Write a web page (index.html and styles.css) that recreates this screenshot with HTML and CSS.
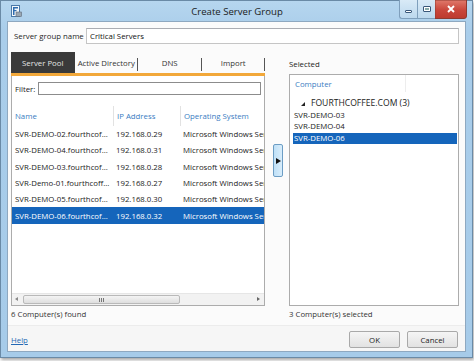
FILE: index.html
```html
<!DOCTYPE html>
<html>
<head>
<meta charset="utf-8">
<link rel="stylesheet" href="styles.css">
</head>
<body>
<div class="window">
  <div class="titlebar">
    <div class="tb-left">
      <svg class="appicon" width="11" height="12" viewBox="0 0 11 12">
        <rect x="0.5" y="0.5" width="8" height="11" fill="#f4f8fc" stroke="#4a78a8"/>
        <rect x="2" y="2" width="5" height="1.5" fill="#2f6db0"/>
        <rect x="2" y="2" width="1.5" height="8" fill="#2f6db0"/>
        <rect x="2" y="5" width="3.5" height="1.2" fill="#2f6db0"/>
        <rect x="5" y="7" width="5.5" height="4.5" fill="#9aa6b2" stroke="#5d6a78" stroke-width="0.6"/>
      </svg>
    </div>
    <div class="title">Create Server Group</div>
    <div class="controls">
      <span class="ctl min"><i></i></span>
      <span class="ctl max"><i></i></span>
      <svg class="xbtn" width="32" height="19" viewBox="0 0 32 19">
        <defs>
          <linearGradient id="xg" x1="0" y1="0" x2="0" y2="1">
            <stop offset="0" stop-color="#e07a6c"/>
            <stop offset="0.55" stop-color="#c9463b"/>
            <stop offset="1" stop-color="#bd3a2e"/>
          </linearGradient>
        </defs>
        <path d="M0 0 H31.5 V16 Q31.5 18.5 29 18.5 H0 Z" fill="url(#xg)" stroke="#8e3a30" stroke-width="1"/>
        <path d="M13 6 L19 12 M19 6 L13 12" stroke="#ffffff" stroke-width="1.9" fill="none"/>
      </svg>
    </div>
  </div>
  <div class="client">
    <div class="namerow">
      <span class="namelabel">Server group name</span>
      <div class="textbox">Critical Servers</div>
    </div>
    <div class="main">
      <div class="leftcol">
        <div class="tabs">
          <div class="tab active">Server Pool</div>
          <div class="tab">Active Directory</div>
          <div class="tab">DNS</div>
          <div class="tab">Import</div>
        </div>
        <div class="orange"></div>
        <div class="panel">
          <div class="filter">
            <span class="filterlabel">Filter:</span>
            <div class="filterbox"></div>
          </div>
          <div class="list">
            <div class="row hdr">
              <span class="c1">Name</span><span class="c2">IP Address</span><span class="c3">Operating System</span>
            </div>
            <div class="row"><span class="c1">SVR-DEMO-02.fourthcof...</span><span class="c2">192.168.0.29</span><span class="c3">Microsoft Windows Ser</span></div>
            <div class="row"><span class="c1">SVR-DEMO-04.fourthcof...</span><span class="c2">192.168.0.31</span><span class="c3">Microsoft Windows Ser</span></div>
            <div class="row"><span class="c1">SVR-DEMO-03.fourthcof...</span><span class="c2">192.168.0.28</span><span class="c3">Microsoft Windows Ser</span></div>
            <div class="row"><span class="c1">SVR-Demo-01.fourthcoff...</span><span class="c2">192.168.0.27</span><span class="c3">Microsoft Windows Ser</span></div>
            <div class="row"><span class="c1">SVR-DEMO-05.fourthcof...</span><span class="c2">192.168.0.30</span><span class="c3">Microsoft Windows Ser</span></div>
            <div class="row sel"><span class="c1">SVR-DEMO-06.fourthcof...</span><span class="c2">192.168.0.32</span><span class="c3">Microsoft Windows Ser</span></div>
          </div>
          <div class="hscroll">
            <span class="sarrow left"></span>
            <div class="strack"><div class="thumb"><span class="grip"></span></div></div>
            <span class="sarrow right"></span>
          </div>
        </div>
      </div>
      <div class="mid"><div class="addbtn"><span class="tri"></span></div></div>
      <div class="rightcol">
        <div class="sellabel">Selected</div>
        <div class="selbox">
          <div class="selhdr"><span>Computer</span></div>
          <div class="group"><span class="gtri"></span>FOURTHCOFFEE.COM (3)</div>
          <div class="item">SVR-DEMO-03</div>
          <div class="item">SVR-DEMO-04</div>
          <div class="item sel">SVR-DEMO-06</div>
        </div>
      </div>
      <div class="status">6 Computer(s) found</div>
      <div></div>
      <div class="status">3 Computer(s) selected</div>
    </div>
    <div class="footer">
      <a class="help" href="#">Help</a>
      <div class="btns">
        <div class="btn">OK</div>
        <div class="btn">Cancel</div>
      </div>
    </div>
  </div>
</div>
</body>
</html>
```
FILE: styles.css
```css
* { box-sizing: border-box; }
html, body { margin: 0; padding: 0; }
body {
  background: #ffffff;
  font-family: "Open Sans", "Noto Sans", sans-serif;
  font-size: 7.8px;
  color: #222;
  width: 474px;
  height: 361px;
  overflow: hidden;
}
.window {
  width: 473px;
  height: 358px;
  border: 1px solid #6a8aa6;
  background: linear-gradient(#b6d6ef, #a9cdea 30px, #a6cbe9);
  padding: 0 6px 6px 6px;
  box-shadow: 1px 2px 3px rgba(0,0,0,0.35);
}
.titlebar {
  height: 20px;
  display: grid;
  grid-template-columns: 1fr auto 1fr;
  align-items: start;
  margin-right: -1px;
}
.tb-left { padding: 4px 0 0 4px; height: 20px; }
.appicon { display: block; }
.title {
  font-size: 9.6px;
  color: #1b1b1b;
  line-height: 21px;
}
.controls {
  justify-self: end;
  display: flex;
  height: 19px;
  margin-top: -1px;
}
.ctl {
  display: flex;
  align-items: center;
  justify-content: center;
  height: 19px;
  border: 1px solid #7f9fbc;
  border-top: none;
  background: linear-gradient(#d9eaf7, #bcd8ee);
}
.ctl.min { width: 18px; border-right: none; border-radius: 0 0 0 3px; }
.ctl.max { width: 18px; border-right: none; }
.ctl.min i { width: 7px; height: 3px; border: 1px solid #39577a; border-radius: 1px; margin-top: 4px; background: #fff; }
.ctl.max i { width: 8px; height: 6px; border: 1px solid #39577a; border-radius: 1px; background: #fff; box-shadow: inset 0 0 0 1px #fff, inset 0 0 0 2px #8aa; }
.xbtn { display: block; }
.client {
  background: #fbfbfb;
  border: 1px solid #8ea8c0;
  height: 331px;
  display: flex;
  flex-direction: column;
}
.namerow {
  display: flex;
  align-items: center;
  margin-top: 6px;
  padding-left: 6px;
  height: 16px;
}
.namelabel { width: 72px; color: #1e1e1e; }
.textbox {
  width: 373px;
  height: 16px;
  border: 1px solid #c5c5c5;
  border-top-color: #abadb3;
  background: #fff;
  padding-left: 3px;
  line-height: 14px;
  color: #111;
}
.main {
  margin-top: 8px;
  padding-left: 3px;
  display: grid;
  grid-template-columns: 254px 24px 170px;
  grid-template-rows: 254px 16px;
}
.tabs {
  display: flex;
  height: 21px;
}
.tab {
  flex: 1;
  display: flex;
  align-items: center;
  justify-content: center;
  position: relative;
  color: #333;
}
.tab::after {
  content: "";
  position: absolute;
  right: 0;
  top: 6px;
  height: 13px;
  border-right: 1px solid #555;
}
.tab.active {
  background: #3a3a3a;
  color: #e4e4e4;
}
.tab.active::after { display: none; }
.orange { height: 3px; background: #f2a83a; }
.panel {
  height: 230px;
  border: 1px solid #acacac;
  border-top: none;
  background: #fff;
  display: flex;
  flex-direction: column;
}
.filter {
  display: flex;
  align-items: center;
  margin-top: 6px;
  padding: 0 3px;
  height: 13px;
}
.filterlabel { width: 23px; color: #222; }
.filterbox {
  flex: 1;
  height: 13px;
  border: 1px solid #8c8c8c;
  background: #fff;
}
.list {
  flex: 1;
  margin-top: 11px;
  overflow: hidden;
}
.row {
  display: flex;
  height: 16.3px;
  align-items: center;
  white-space: nowrap;
}
.row span { display: block; overflow: hidden; padding-left: 3px; }
.c1 { width: 101px; }
.c2 { width: 67px; }
.c3 { width: 84px; }
.row.hdr {
  height: 20px;
  color: #3a7cc2;
}
.row.hdr .c2, .row.hdr .c3 {
  border-left: 1px solid #e2e2e2;
  height: 20px;
  line-height: 20px;
}
.row.sel { background: #1565bb; color: #fff; }
.row.sel span { color: #fff; }
.hscroll {
  height: 12px;
  display: flex;
  align-items: center;
  background: #f2f2f2;
  border-top: 1px solid #e6e6e6;
}
.sarrow { width: 11px; height: 11px; position: relative; }
.sarrow::after {
  content: "";
  position: absolute;
  top: 3px;
  border-top: 2.5px solid transparent;
  border-bottom: 2.5px solid transparent;
}
.sarrow.left::after { left: 3px; border-right: 3px solid #888; }
.sarrow.right::after { left: 4px; border-left: 3px solid #666; }
.strack { flex: 1; height: 11px; position: relative; }
.thumb {
  position: absolute;
  left: 0;
  width: 157px;
  top: 1px;
  height: 9px;
  border: 1px solid #b9b9b9;
  border-radius: 2px;
  background: linear-gradient(#f4f4f4, #dedede);
  display: flex;
  align-items: center;
  justify-content: center;
}
.grip {
  width: 6px;
  height: 4px;
  background: repeating-linear-gradient(90deg, #777 0 1px, transparent 1px 2px);
}
.mid {
  display: flex;
  justify-content: center;
  padding-top: 92px;
  padding-left: 1px;
}
.addbtn {
  width: 10px;
  height: 33px;
  border: 1px solid #6c9dc4;
  border-radius: 2px;
  background: linear-gradient(90deg, #bfe0f7, #d8edfb);
  display: flex;
  align-items: center;
  justify-content: center;
}
.tri {
  border-top: 3px solid transparent;
  border-bottom: 3px solid transparent;
  border-left: 5px solid #111;
  margin-left: 1px;
}
.rightcol { display: flex; flex-direction: column; }
.sellabel {
  height: 22px;
  line-height: 25px;
  color: #222;
}
.selbox {
  height: 232px;
  border: 1px solid #acacac;
  background: #fff;
}
.selhdr {
  height: 20px;
  line-height: 19px;
  padding-left: 5px;
  color: #3a7cc2;
  position: relative;
}
.selhdr::after {
  content: "";
  position: absolute;
  left: 115px;
  top: 0;
  height: 17px;
  border-left: 1px solid #ededed;
}
.group {
  margin-top: 3px;
  height: 11.6px;
  line-height: 11.6px;
  padding-left: 11px;
  display: flex;
  align-items: center;
  font-size: 8.6px;
  color: #222;
}
.gtri {
  width: 0; height: 0;
  border-left: 4px solid transparent;
  border-bottom: 4px solid #222;
  margin-right: 6px;
}
.item {
  height: 11.6px;
  line-height: 11.6px;
  padding-left: 4px;
  color: #222;
}
.item.sel {
  background: #1565bb;
  color: #fff;
  margin: 0 1px 0 3px;
  padding-left: 1px;
}
.status {
  line-height: 16px;
  color: #333;
}
.footer {
  flex: 1;
  margin-top: 3px;
  border-top: 1px solid #ececec;
  background: #f6f6f6;
  display: flex;
  align-items: center;
  justify-content: space-between;
  padding: 0 7px 0 3px;
}
.help {
  color: #2468b4;
  text-decoration: underline;
  margin-top: 3px;
}
.btns { display: flex; gap: 7px; margin-top: 2px; }
.btn {
  width: 51px;
  height: 17px;
  border: 1px solid #a9a9a9;
  border-radius: 2px;
  background: linear-gradient(#f5f5f5, #e2e2e2);
  display: flex;
  align-items: center;
  justify-content: center;
  color: #222;
}
```
